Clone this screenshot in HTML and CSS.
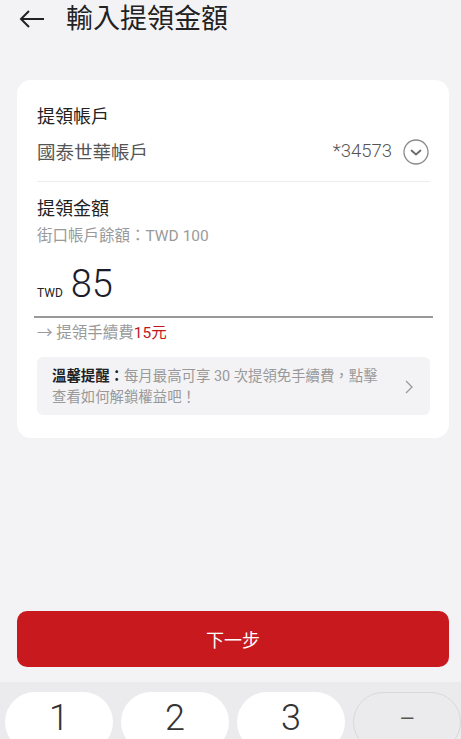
FILE: index.html
```html
<!DOCTYPE html>
<html lang="zh-Hant">
<head>
    <meta charset="UTF-8">
    <meta name="viewport" content="width=device-width, initial-scale=1.0">
    <title>輸入提領金額</title>
    <link rel="stylesheet" href="styles.css">
</head>
<body>

    <div class="page">
        <div class="header">
            <svg class="back" width="26" height="20" viewBox="0 0 26 20">
                <path d="M25 10H2M10 2L2 10l8 8" fill="none" stroke="#222" stroke-width="2"/>
            </svg>
            <h1>輸入提領金額</h1>
        </div>

        <div class="card">
            <div class="label">提領帳戶</div>
            <div class="account-row">
                <span>國泰世華帳戶</span>
                <span class="account-no">
                    *34573
                    <svg width="26" height="26" viewBox="0 0 26 26">
                        <circle cx="13" cy="13" r="12" fill="none" stroke="#8a8a8a" stroke-width="1.3"/>
                        <path d="M8.5 11.5l4.5 4 4.5-4" fill="none" stroke="#6a6a6a" stroke-width="1.8" stroke-linecap="round"/>
                    </svg>
                </span>
            </div>

            <div class="divider"></div>

            <div class="label amount-label">提領金額</div>
            <div class="balance">街口帳戶餘額：TWD 100</div>

            <div class="amount-row">
                <span class="currency">TWD</span>
                <span class="amount">85</span>
            </div>

            <div class="fee">→ 提領手續費<span class="fee-value">15元</span></div>

            <div class="tip">
                <p><b>溫馨提醒：</b>每月最高可享 30 次提領免手續費，點擊<br>查看如何解鎖權益吧！</p>
                <svg width="10" height="16" viewBox="0 0 10 16">
                    <path d="M2 2l6 6-6 6" fill="none" stroke="#9a9a9a" stroke-width="1.3"/>
                </svg>
            </div>
        </div>

        <button type="button" class="next-btn">下一步</button>

        <div class="keyboard">
            <div class="key">1</div>
            <div class="key">2</div>
            <div class="key">3</div>
            <div class="key key-minus">−</div>
        </div>
    </div>

</body>
</html>
```

FILE: styles.css
```css
body {
    margin: 0;
    padding: 0;
    background-color: #f3f3f6;
    font-family: Roboto, "Noto Sans CJK TC", sans-serif;
    color: #222;
}

.page {
    height: 739px;
    display: flex;
    flex-direction: column;
    overflow: hidden;
}

.header {
    height: 38px;
    display: flex;
    align-items: center;
    padding-left: 19px;
}

.back {
    margin-right: 21px;
}

.header h1 {
    margin: 0;
    font-size: 27px;
    font-weight: 400;
    line-height: 38px;
    color: #222;
}

.card {
    background: white;
    margin: 42px 12px 0 17px;
    padding: 24px 19px 23px 20px;
    border-radius: 14px;
}

.label {
    font-size: 18px;
    line-height: 26px;
    color: #222;
}

.account-row {
    margin-top: 6px;
    height: 30px;
    display: flex;
    justify-content: space-between;
    align-items: center;
    font-size: 18.5px;
    color: #555;
}

.account-no {
    display: flex;
    align-items: center;
    gap: 11px;
    font-weight: 300;
}

.account-no svg {
    margin-top: 2px;
    margin-right: 1px;
}

.divider {
    margin-top: 15px;
    height: 1px;
    background: #ececec;
}

.amount-label {
    margin-top: 14px;
}

.balance {
    margin-top: 3px;
    font-size: 15.5px;
    line-height: 22px;
    color: #9a9a9a;
}

.amount-row {
    margin: 14px -3px 0 -3px;
    padding: 0 3px 9px 3px;
    display: flex;
    align-items: baseline;
    border-bottom: 2px solid #999;
}

.currency {
    font-size: 12px;
    color: #222;
    margin-right: 8px;
}

.amount {
    font-size: 38px;
    font-weight: 300;
    line-height: 46px;
    color: #1c1c2a;
}

.fee {
    margin-top: 4px;
    font-size: 15.5px;
    line-height: 22px;
    color: #9a9a9a;
}

.fee-value {
    color: #c0161d;
}

.tip {
    margin-top: 13px;
    background: #f3f3f5;
    border-radius: 6px;
    padding: 9px 16px 7px 15px;
    display: flex;
    align-items: center;
    justify-content: space-between;
}

.tip p {
    margin: 0;
    font-size: 14.4px;
    line-height: 21px;
    color: #999;
}

.tip b {
    color: #222;
}

.next-btn {
    margin: auto 12px 0 17px;
    height: 56px;
    background: #c8191f;
    color: white;
    border: none;
    border-radius: 10px;
    font-family: Roboto, "Noto Sans CJK TC", sans-serif;
    font-size: 18px;
}

.keyboard {
    margin-top: 15px;
    height: 57px;
    background: #ebebed;
    display: flex;
    gap: 8px;
    padding: 10px 0 0 5px;
    box-sizing: border-box;
    overflow: hidden;
}

.key {
    flex: 0 0 108px;
    height: 60px;
    background: white;
    border-radius: 30px;
    text-align: center;
    font-size: 36px;
    font-weight: 300;
    line-height: 52px;
    color: #333;
}

.key-minus {
    background: #ebebed;
    border: 1px solid #d9d9db;
    box-sizing: border-box;
    color: #555;
    font-size: 30px;
}
```
